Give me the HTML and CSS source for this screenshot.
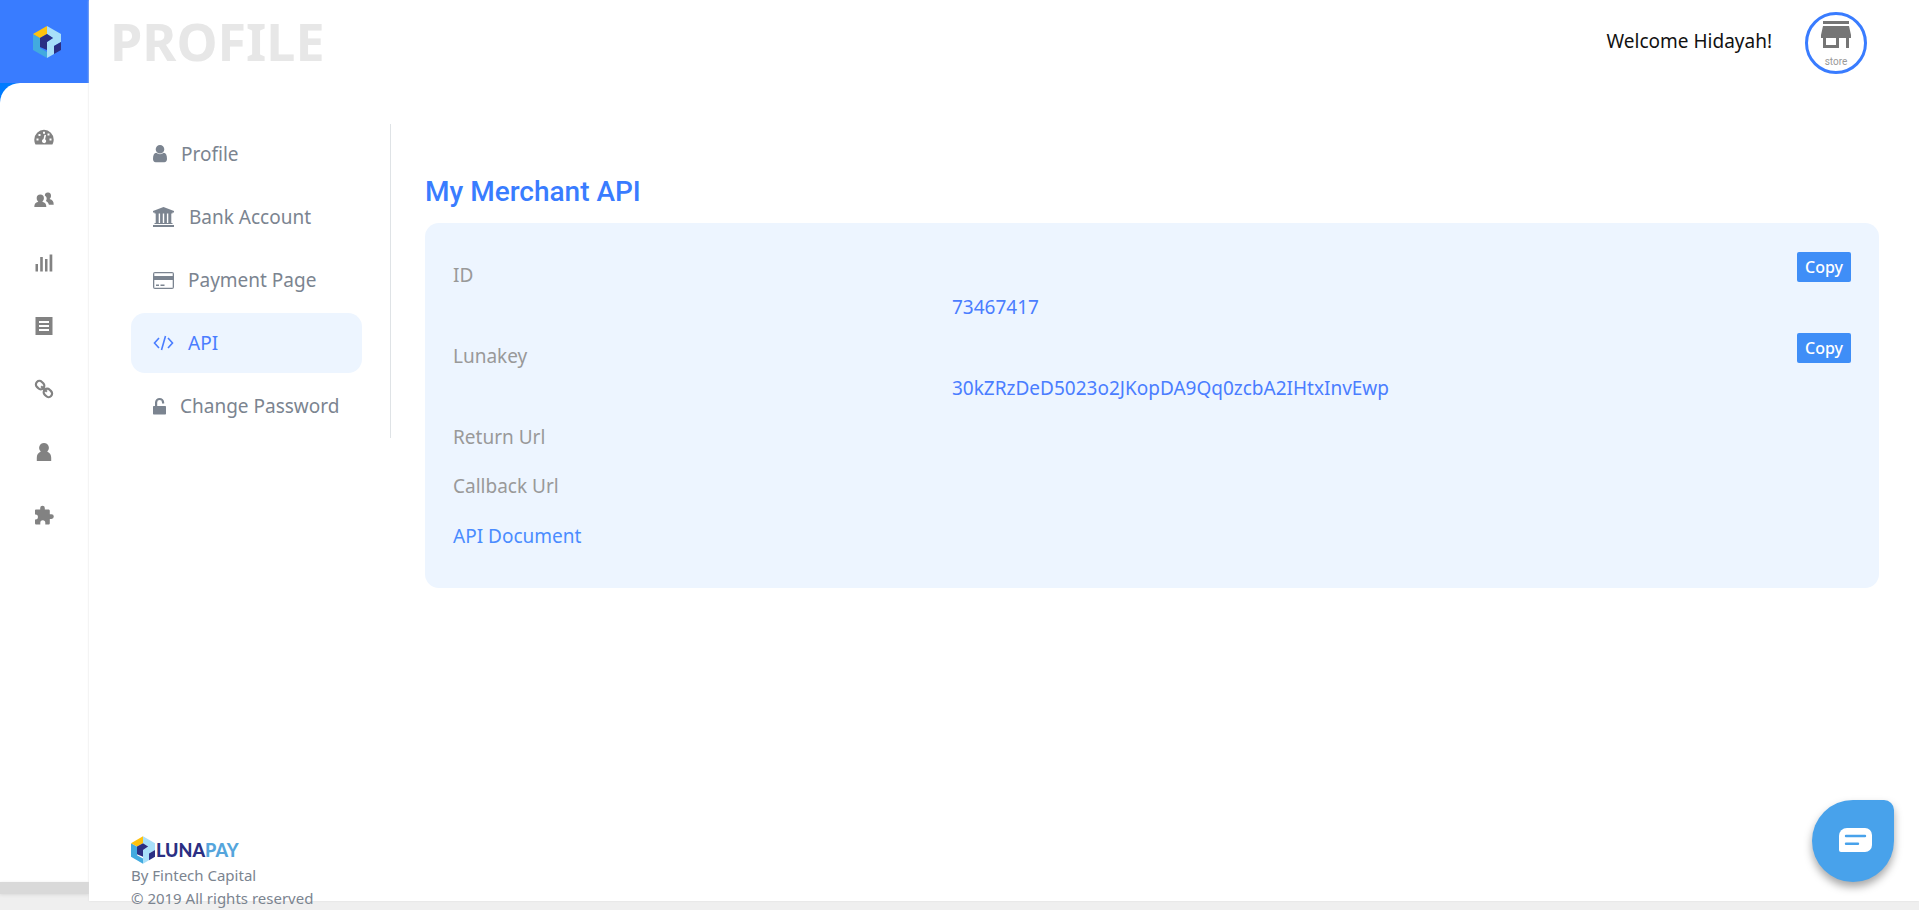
FILE: index.html
```html
<!DOCTYPE html>
<html lang="en">
<head>
<meta charset="utf-8">
<meta name="viewport" content="width=device-width, initial-scale=1">
<title>Profile - LunaPay</title>
<link rel="stylesheet" href="styles.css">
</head>
<body>
<svg class="defs" aria-hidden="true">
  <symbol id="cube" viewBox="0 0 28 32">
    <path fill="#42aadf" d="M0 8l7 4v10l7 4v6L0 24z"/>
    <path fill="#ffc20e" d="M14 0v8l-7 4-7-4z"/>
    <path fill="#a8dff9" d="M14 0l14 8v8l-7 4v8l-7 4V16l6-4-6-4z"/>
    <path fill="#2b2f83" d="M14 8l6 4-6 4v8l-7-3v-9zM28 16v8l-7 4v-8z"/>
  </symbol>
</svg>
<div class="shell">
  <aside class="sidebar">
    <a class="brand" href="#" aria-label="LunaPay home"><svg width="28" height="32"><use href="#cube"/></svg></a>
    <div class="nav-wrap">
      <nav class="nav" aria-label="Main">
        <a href="#" aria-label="Dashboard"><svg width="20" height="20" viewBox="0 0 20 20"><path fill="currentColor" fill-rule="evenodd" d="M1.500 17.500C.6 16 .3 14.300.3 12.500a9.700 9.700 0 0 1 19.400 0c0 1.800-.4 3.500-1.300 5zM2.500 11.500h2v2h-2zM4.500 7h2v2h-2zM9 4.800h2v2H9zM13.500 6.500h2v2h-2zM15.500 11.500h2v2h-2zM10.500 7.800l-1 4.200a2.100 2.100 0 1 0 1.600.2l1-4.100z"/></svg></a>
        <a href="#" aria-label="Customers"><svg width="20" height="20" viewBox="0 0 20 20"><path fill="currentColor" d="M.3 17c0-3 1-4.500 4-5.300C3 10.600 2.700 9.300 2.700 8a3.600 3.600 0 0 1 7.200 0c0 1.300-.4 2.600-1.600 3.700 3 .8 4 2.300 4 5.300zM10.800 5.500a3.100 3.100 0 0 1 6.200.3c0 1.300-.4 2.400-1.400 3.300 3 .8 4.100 2.400 4.100 5.700h-4.800c-.5-1.600-1.300-2.800-3-3.700 1.300-2.500 1.200-3.800-1.100-5.600z"/></svg></a>
        <a href="#" aria-label="Reports"><svg width="20" height="20" viewBox="0 0 20 20"><path fill="currentColor" d="M1.500 11H4v7.500H1.500zM6.200 4h2.600v14.500H6.200zM11 6h2.500v12.500H11zM15.600 1.500h2.700v17h-2.700z"/></svg></a>
        <a href="#" aria-label="Bills"><svg width="20" height="20" viewBox="0 0 20 20"><path fill="currentColor" fill-rule="evenodd" d="M1.500 1h17v18h-17zM5 5v2h10V5zM5 9v2h10V9zM5 13v2h10v-2z"/></svg></a>
        <a href="#" aria-label="Payment links"><svg width="20" height="20" viewBox="0 0 20 20"><g fill="none" stroke="currentColor" stroke-width="2.200" transform="rotate(45 10 10)"><rect x="0" y="6.500" width="9" height="7" rx="3.500"/><rect x="11" y="6.500" width="9" height="7" rx="3.500"/><path d="M6 10h8"/></g></svg></a>
        <a href="#" aria-label="Account"><svg width="20" height="20" viewBox="0 0 20 20"><path fill="currentColor" d="M10 1a4.800 4.800 0 0 1 3.200 8.400c2.800 1.300 4 3.500 4 6.300v3.300H2.800v-3.300c0-2.800 1.200-5 4-6.300A4.800 4.800 0 0 1 10 1z"/></svg></a>
        <a href="#" aria-label="Plugins"><svg width="20" height="20" viewBox="0 0 20 20"><path fill="currentColor" d="M1 5.500C1 4.700 1.500 4.500 2.200 4.500h4V3a2.300 2.300 0 0 1 4.600 0v1.500h3.500c1 0 1.500.5 1.500 1.500v3.200h1.600a2.400 2.400 0 0 1 0 4.800h-1.600v4c0 1-.5 1.500-1.500 1.500h-3v-1.700a2.500 2.500 0 0 0-5 0v1.700H2.500C1.500 19.500 1 19 1 18v-3.500h1a2.500 2.500 0 0 0 0-4.900H1z"/></svg></a>
      </nav>
    </div>
    <div class="sidebar-end"></div>
  </aside>

  <div class="page">
    <header class="topbar">
      <h1>PROFILE</h1>
      <div class="user">
        <span>Welcome Hidayah!</span>
        <a class="avatar" href="#">
          <svg width="30" height="28" viewBox="0 0 30 28" aria-hidden="true"><path fill="#757575" fill-rule="evenodd" d="M2 0h26v3H2zM2 5h26l2 9v3h-2v10h-3V17h-7v10H2V17H0v-3zM5 17v7h10v-7z"/></svg>
          <small>store</small>
        </a>
      </div>
    </header>

    <main class="content">
      <nav class="menu" aria-label="Profile sections">
        <a href="#"><svg width="14" height="18" viewBox="0 0 14 18"><path fill="currentColor" d="M7 0a4.200 4.200 0 0 1 0 8.600A4.200 4.200 0 0 1 7 0zM3.300 7.800a5.400 5.400 0 0 0 7.400 0C13 8 14 10.500 14 14c0 2-1 3.200-2.700 3.200H2.700C1 17.200 0 16 0 14c0-3.500 1-6 3.300-6.200z"/></svg>Profile</a>
        <a href="#"><svg width="21" height="20" viewBox="0 0 21 20"><path fill="currentColor" d="M10.500 0L21 4v1.500h-1.500v1h-18v-1H0V4zM2.700 6.500h3V16h1.400V6.500h2.700V16h1.400V6.500h2.700V16h1.400V6.500h3V16h1.200v1h-18v-1h1.200zM0 18h21v2H0z"/></svg><span class="bank">Bank Account</span></a>
        <a href="#"><svg width="21" height="17" viewBox="0 0 21 17"><path fill="currentColor" fill-rule="evenodd" d="M2 0h17a2 2 0 0 1 2 2v13a2 2 0 0 1-2 2H2a2 2 0 0 1-2-2V2a2 2 0 0 1 2-2zM1.300 1.300V4h18.400V1.300zM1.300 8v7.700h18.400V8zM3 12.500h3V14H3zM7.500 12.500h4V14h-4z"/></svg>Payment Page</a>
        <a class="active" href="#" aria-current="page"><svg width="21" height="16" viewBox="0 0 21 16"><path fill="none" stroke="currentColor" stroke-width="1.600" d="M6 3L1.500 8 6 13M15 3l4.500 5-4.500 5M12.500 1l-4 14"/></svg>API</a>
        <a href="#"><svg width="13" height="18" viewBox="0 0 13 18"><path fill="currentColor" d="M2 9V5.500a4.600 4.600 0 0 1 9.200 0V6.500H9V5.500a2.400 2.400 0 0 0-4.800 0V9H12c.6 0 1 .4 1 1v6.500c0 .6-.4 1-1 1H1c-.6 0-1-.4-1-1V10c0-.6.400-1 1-1z"/></svg>Change Password</a>
      </nav>

      <section class="api">
        <h2>My Merchant API</h2>
        <dl class="card">
          <div class="row">
            <dt id="id-label">ID</dt>
            <dd class="action"><button type="button" aria-describedby="id-label">Copy</button></dd>
            <dd class="value">73467417</dd>
          </div>
          <div class="row">
            <dt id="key-label">Lunakey</dt>
            <dd class="action"><button type="button" aria-describedby="key-label">Copy</button></dd>
            <dd class="value">30kZRzDeD5023o2JKopDA9Qq0zcbA2IHtxInvEwp</dd>
          </div>
          <div class="row"><dt>Return Url</dt></div>
          <div class="row"><dt>Callback Url</dt></div>
          <div class="row"><dt class="doc"><a href="#">API Document</a></dt></div>
        </dl>
      </section>
    </main>

    <footer class="footer">
      <a class="wordmark" href="#"><svg width="24" height="28" aria-hidden="true"><use href="#cube"/></svg><span>LUNA<b>PAY</b></span></a>
      <p>By Fintech Capital</p>
      <p>© 2019 All rights reserved</p>
    </footer>
  </div>
</div>
<button class="chat" type="button" aria-label="Open chat">
  <svg width="33" height="24" viewBox="0 0 33 24"><path fill="#fff" d="M8 0h18a7 7 0 0 1 7 7v10a7 7 0 0 1-7 7H2a2 2 0 0 1-2-2V8a8 8 0 0 1 8-8z"/><path stroke="#48a2eb" stroke-width="2.400" stroke-linecap="round" d="M7 8h19M7 15.800h12"/></svg>
</button>
</body>
</html>
```
FILE: styles.css
```css
* { box-sizing: border-box; }

body {
  margin: 0;
  background: #efefef;
  color: #7b8490;
  font: 19px/28px "Noto Sans", sans-serif;
}

h1, h2, p, dl, dd { margin: 0; }
a { color: inherit; text-decoration: none; }
svg { display: block; flex: none; }
.defs { position: absolute; width: 0; height: 0; }

.shell {
  display: grid;
  grid-template-columns: 89px 1fr;
  min-height: 100vh;
}

/* Sidebar */
.sidebar { display: flex; flex-direction: column; padding-bottom: 16px; }
.brand {
  display: flex;
  align-items: center;
  justify-content: center;
  height: 83px;
  padding-left: 4px;
  background: #397cff;
}
.nav-wrap {
  flex: 1;
  background: linear-gradient(#007bff 40px, #fff 40px);
}
.nav {
  display: flex;
  flex-direction: column;
  height: 100%;
  padding: 22px 2px 0 0;
  border-top-left-radius: 20px;
  background: #fff;
  color: #828282;
}
.nav a {
  display: flex;
  align-items: center;
  justify-content: center;
  height: 63px;
}
.sidebar-end {
  height: 12px;
  background: #d9d9d9;
  box-shadow: 0 1px 3px #d9d9d9;
}

/* Page */
.page {
  display: flex;
  flex-direction: column;
  margin-bottom: 9px;
  background: #fff;
  box-shadow: 0 0 2px #ddd;
}
.topbar {
  display: flex;
  align-items: flex-start;
  justify-content: space-between;
  height: 86px;
  padding: 5px 52px 0 21px;
}
h1 {
  color: #e7e7e7;
  font-size: 52px;
  font-weight: 700;
  line-height: 72px;
}
.user {
  display: flex;
  gap: 33px;
  padding-top: 7px;
  color: #111;
  line-height: 58px;
}
.avatar {
  display: flex;
  flex-direction: column;
  align-items: center;
  width: 62px;
  height: 62px;
  padding-top: 6px;
  border: 3px solid #397cff;
  border-radius: 50%;
}
.avatar small {
  margin-top: 7px;
  color: #999;
  font: 10px/12px Roboto, sans-serif;
}

.content {
  display: flex;
  gap: 34px;
  padding: 38px 40px 0 42px;
}
.menu {
  display: flex;
  flex: none;
  flex-direction: column;
  align-self: flex-start;
  gap: 3px;
  width: 260px;
  padding: 0 28px 2px 0;
  border-right: 1px solid #dfe3e6;
}
.menu a {
  display: flex;
  align-items: center;
  gap: 14px;
  height: 60px;
  padding: 0 22px;
  border-radius: 14px;
  white-space: nowrap;
}
.bank { padding-left: 1px; }
.menu .active { background: #edf5ff; color: #4a7dff; }

.api { flex: 1; min-width: 0; padding-top: 51px; }
h2 {
  margin-bottom: 14px;
  color: #397cff;
  font: 500 28px/34px Roboto, sans-serif;
}
.card {
  padding: 29px 28px 26px;
  border-radius: 14px;
  background: #edf5ff;
}
.row {
  display: grid;
  grid-template-columns: 1fr auto;
  padding-bottom: 12px;
}
dt { padding-top: 9px; color: #999; }
dt a { color: #4a8cff; }
.doc { padding-top: 10px; }
.value {
  grid-column: 1 / -1;
  margin-top: 4px;
  padding-left: calc(100% / 3 + 33px);
  color: #4a7dff;
  overflow-wrap: anywhere;
}
.action button {
  display: block;
  height: 30px;
  padding: 0 8px;
  border: 0;
  border-radius: 2px;
  background: #3f8ef7;
  color: #fff;
  font: 500 16px/30px "Noto Sans", sans-serif;
}
.action { height: 30px; }

.footer {
  margin: auto 0 -9px;
  padding: 40px 42px 0;
  font-size: 15px;
  line-height: 23px;
}
.wordmark {
  display: flex;
  align-items: center;
  gap: 1px;
  height: 28px;
  color: #2b2f83;
  font: 900 18px/28px Lato, sans-serif;
}
.wordmark b { color: #55a5dc; }

.chat {
  position: fixed;
  right: 25px;
  bottom: 28px;
  display: flex;
  align-items: center;
  justify-content: center;
  width: 82px;
  height: 82px;
  padding: 0 0 2px 4px;
  border: 0;
  border-radius: 50% 10px 50% 50%;
  background: #48a2eb;
  box-shadow: 0 5px 8px rgba(0, 0, 0, .35);
}
```
